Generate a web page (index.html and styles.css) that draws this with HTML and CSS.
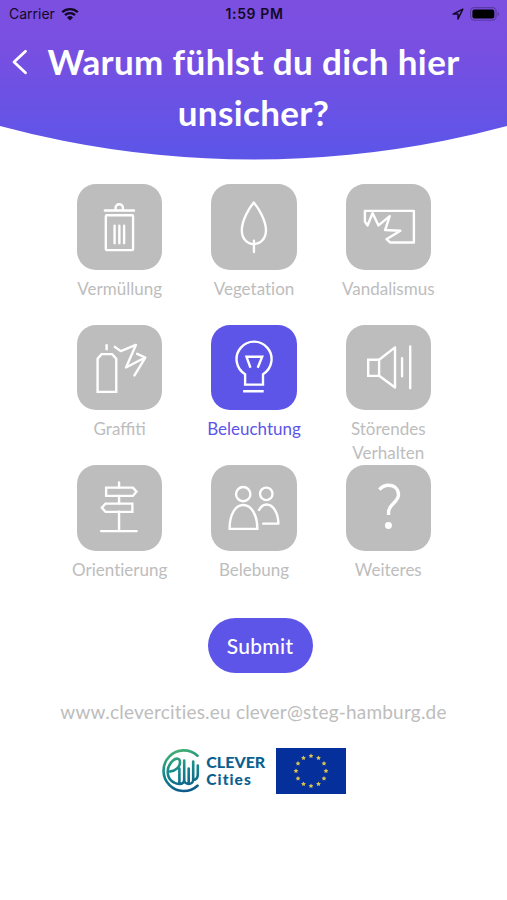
FILE: index.html
```
<!DOCTYPE html>
<html lang="de">
<head>
    <meta charset="UTF-8">
    <meta name="viewport" content="width=device-width, initial-scale=1.0">
    <title>Warum fühlst du dich hier unsicher?</title>
    <link rel="stylesheet" href="styles.css">
</head>
<body>

    <header class="header">
        <div class="status-bar">
            <div class="status-left">
                <span>Carrier</span>
                <svg width="18" height="14" viewBox="0 0 18 14">
                    <path d="M1.2 5.2a11.2 11.2 0 0 1 15.6 0M4 8.1a7.2 7.2 0 0 1 10 0" fill="none" stroke="#120a25" stroke-width="2.3"/>
                    <path d="M9 13.4l-3-3a4.3 4.3 0 0 1 6 0z" fill="#120a25"/>
                </svg>
            </div>
            <span class="status-time">1:59 PM</span>
            <div class="status-right">
                <svg width="12" height="12" viewBox="0 0 12 12">
                    <path d="M1 6.1L10.8 1.2 6 11V6.1z" fill="none" stroke="#120a25" stroke-width="1.5" stroke-linejoin="round"/>
                </svg>
                <svg width="30" height="14" viewBox="0 0 30 14">
                    <rect x=".6" y=".6" width="25.5" height="12.6" rx="3.6" fill="none" stroke="#5a3aa5" stroke-width="1.1"/>
                    <rect x="2.4" y="2.4" width="21.9" height="9" rx="2" fill="#000"/>
                    <path d="M27.6 4.8c2 .8 2 3.6 0 4.4z" fill="#5a3aa5"/>
                </svg>
            </div>
        </div>
        <div class="title-row">
            <button type="button" class="back-btn" aria-label="Zurück">
                <svg width="16" height="26" viewBox="0 0 16 26">
                    <path d="M13.5 2.2L2 13l11.5 10.8" fill="none" stroke="#fff" stroke-width="2.8" stroke-linecap="round" stroke-linejoin="round"/>
                </svg>
            </button>
            <h1>Warum fühlst du dich hier<br>unsicher?</h1>
        </div>
    </header>

    <main class="content">
        <div class="reasons">
            <div class="reason">
                <svg class="tile" viewBox="0 0 86 86">
                    <path d="M28 26.7h29.3M38.8 26v-2a3.7 3.7 0 0 1 7.4 0v2"/>
                    <rect x="29" y="31.5" width="27.4" height="35" rx="1"/>
                    <path d="M37.8 42v17.5M42.6 42v17.5M47.4 42v17.5"/>
                </svg>
                <span class="label">Vermüllung</span>
            </div>
            <div class="reason">
                <svg class="tile" viewBox="0 0 86 86">
                    <path d="M43 60.5C35.500 60 31 54.500 31 46.500 31 37 38 24.500 43 18.500 48 24.500 55.300 37 55.300 46.500 55.300 54.500 50.500 60 43 60.500z"/>
                    <path d="M43.200 57v11.500"/>
                </svg>
                <span class="label plain">Vegetation</span>
            </div>
            <div class="reason">
                <svg class="tile" viewBox="0 0 86 86">
                    <path d="M19 27h49.300v31.800h-24l-3.600-3.300 14-8.500-15.400-.7L44 32.300l-11.300 9.400-6-12.400-5 12.400L19 37.700z"/>
                </svg>
                <span class="label">Vandalismus</span>
            </div>
            <div class="reason">
                <svg class="tile" viewBox="0 0 86 86">
                    <path class="sharp" d="M20.700 67.300V34l4-4.700h10.600l4.200 4.700v33.300zM29.800 19.300v6"/>
                    <path d="M38 22l6 4.300L59.300 20l-10 22.700 19.200-10M60.500 29l8.200 3.700-10.900 18"/>
                </svg>
                <span class="label">Graffiti</span>
            </div>
            <div class="reason selected">
                <svg class="tile" viewBox="0 0 86 86">
                    <path class="sharp" d="M34.300 60V49.500A17.600 17.600 0 1 1 52.300 49.500V60zM32.300 66.700H53M39.700 43l-4-11h15.800L47 43"/>
                </svg>
                <span class="label">Beleuchtung</span>
            </div>
            <div class="reason">
                <svg class="tile" viewBox="0 0 86 86">
                    <path class="sharp" d="M22.300 35h11v16.200h-11z"/>
                    <path d="M33.300 35l16-12.500v40.300L33.300 51M56.400 33.500v18M64.600 21.500v42"/>
                </svg>
                <span class="label">Störendes<br>Verhalten</span>
            </div>
            <div class="reason">
                <svg class="tile" viewBox="0 0 86 86">
                    <path d="M42.300 17.500v5M42.300 31v7.500M42.300 47v19.300M24.300 66.500H60"/>
                    <path class="sharp" d="M29.300 22.800h27l3.500 4-3.500 4.300h-27zM55.700 38.800h-27l-3.700 4.200 3.700 4.100h27z"/>
                </svg>
                <span class="label plain">Orientierung</span>
            </div>
            <div class="reason">
                <svg class="tile" viewBox="0 0 86 86">
                    <circle cx="32.400" cy="29.300" r="7.200"/>
                    <path class="sharp" d="M18.700 64.200c0-14 5.500-23.900 13.700-23.900s14.200 9.900 14.200 23.900z"/>
                    <circle cx="55.600" cy="29" r="6.300"/>
                    <path d="M48.300 45.300c2-3.600 4.500-5.600 7.500-5.600 7 0 11.700 9 12 19.300H52.500"/>
                </svg>
                <span class="label">Belebung</span>
            </div>
            <div class="reason">
                <svg class="tile" viewBox="0 0 86 86">
                    <path class="question" d="M33.600 24.800c2.500-3 5.400-4.400 9-4.400 6.200 0 10.200 3.800 10.200 9.600 0 7.600-10 9.500-10 17.300v3"/>
                    <circle class="dot" cx="42.700" cy="60.800" r="3.500"/>
                </svg>
                <span class="label">Weiteres</span>
            </div>
        </div>

        <button type="button" class="submit-btn">Submit</button>

        <p class="contact">www.clevercities.eu clever@steg-hamburg.de</p>

        <div class="logos">
            <svg class="clever" width="105" height="46" viewBox="0 0 105 46">
                <defs>
                    <linearGradient id="leaf" gradientUnits="userSpaceOnUse" x1="10" y1="0" x2="22" y2="44">
                        <stop offset="0" stop-color="#4cb66c"/>
                        <stop offset=".5" stop-color="#14898c"/>
                        <stop offset="1" stop-color="#0d5a8a"/>
                    </linearGradient>
                </defs>
                <g fill="none" stroke="url(#leaf)" stroke-width="2.6" stroke-linecap="round" stroke-linejoin="round">
                    <path d="M35.500 7.700A20.300 20.300 0 1 0 35.500 37.700"/>
                    <path d="M8 23.500c6-1 10-4.500 10-9.500 0-4-4-4.300-7-1.500-7 6.500-7.500 17.500 1 22 1.700 1 3.800 1.500 5.400 1.500V20.500M17.400 36c3.500 0 4.800-1.800 4.800-4.500V12.500M22.200 31.500c0 6 9 6 9 0V13.500M26.700 35.500V20.500M31.200 32c3.500 0 4.600-2.500 4.600-6v-8.500"/>
                </g>
                <text x="44.300" y="20" textLength="59" lengthAdjust="spacingAndGlyphs">CLEVER</text>
                <text x="44.300" y="37" textLength="44.500">Cities</text>
            </svg>
            <svg class="flag" width="70" height="46" viewBox="0 0 70 46">
                <defs>
                    <path id="star" d="M0-2.500L.8-.9 2.400-.7 1.200.4 1.500 2.100 0 1.300-1.500 2.100-1.200.4-2.400-.7-.8-.9z" fill="#d8c553"/>
                </defs>
                <rect width="70" height="46" fill="#052f9b"/>
                <use href="#star" x="35" y="8"/>
                <use href="#star" x="42.500" y="10"/>
                <use href="#star" x="48" y="15.500"/>
                <use href="#star" x="50" y="23"/>
                <use href="#star" x="48" y="30.500"/>
                <use href="#star" x="42.500" y="36"/>
                <use href="#star" x="35" y="38"/>
                <use href="#star" x="27.500" y="36"/>
                <use href="#star" x="22" y="30.500"/>
                <use href="#star" x="20" y="23"/>
                <use href="#star" x="22" y="15.500"/>
                <use href="#star" x="27.500" y="10"/>
            </svg>
        </div>
    </main>

</body>
</html>
```
FILE: styles.css
```
* {
    box-sizing: border-box;
}

body {
    margin: 0;
    width: 507px;
    height: 900px;
    background-color: #fff;
    font-family: Lato, sans-serif;
    overflow: hidden;
}

/* Purple header with a curved bottom edge */
.header {
    height: 160px;
    background: linear-gradient(#7d4fe0 0, #784fe1 50px, #5d55e8 150px);
    clip-path: circle(976px at 50% -816.5px);
}

.status-bar {
    display: grid;
    grid-template-columns: 1fr auto 1fr;
    align-items: center;
    height: 27px;
    padding: 0 7px 0 9px;
    color: #120a25;
    font-family: Inter, sans-serif;
    font-size: 14px;
}

.status-left,
.status-right {
    display: flex;
    align-items: center;
    gap: 6px;
}

.status-right {
    justify-content: flex-end;
}

.status-time {
    font-weight: 600;
    letter-spacing: 0.6px;
}

.title-row {
    display: flex;
    align-items: flex-start;
    padding: 9px 0 0 12px;
}

.back-btn {
    display: flex;
    padding: 13px 0 0;
    border: none;
    background: none;
    cursor: pointer;
}

.header h1 {
    flex: 1;
    margin: 0 28px 0 0;
    color: #fff;
    font-size: 35px;
    font-weight: 700;
    line-height: 51px;
    letter-spacing: 0.37px;
    text-align: center;
    white-space: nowrap;
}

.content {
    display: flex;
    flex-direction: column;
    align-items: center;
    padding-top: 24px;
}

/* 3x3 grid of reasons */
.reasons {
    display: grid;
    grid-template-columns: repeat(3, 134.3px);
    grid-auto-rows: 140.5px;
    margin-left: 1px;
}

.reason {
    display: flex;
    flex-direction: column;
    align-items: center;
    color: #bdbdbd;
}

.tile {
    flex: none;
    width: 85.5px;
    height: 85.5px;
    border-radius: 19px;
    background-color: #bdbdbd;
    fill: none;
    stroke: #fff;
    stroke-width: 2.4;
    stroke-linecap: round;
    stroke-linejoin: round;
}

.tile .sharp {
    stroke-linecap: butt;
    stroke-linejoin: miter;
}

.tile .question {
    stroke-width: 3.4;
    stroke-linecap: butt;
}

.tile .dot {
    fill: #fff;
    stroke: none;
}

.label {
    margin-top: 7px;
    font-size: 17px;
    line-height: 24px;
    text-align: center;
    white-space: nowrap;
}

.plain {
    font-variant-ligatures: none;
}

.selected {
    color: #5d55e8;
}

.selected .tile {
    background-color: #5d55e8;
}

.submit-btn {
    width: 105px;
    height: 55px;
    margin: 12px 0 0 13px;
    border: none;
    border-radius: 28px;
    background-color: #5d55e8;
    color: #fff;
    font-family: inherit;
    font-size: 21px;
    font-weight: 500;
    letter-spacing: 0.3px;
    cursor: pointer;
}

.contact {
    margin: 26px 0 0;
    color: #bdbdbd;
    font-size: 19px;
    line-height: 26px;
    letter-spacing: 0.2px;
    white-space: nowrap;
}

.logos {
    display: flex;
    gap: 9px;
    margin-top: 23px;
}

.clever text {
    fill: #0d5f8f;
    font-size: 15.5px;
    font-weight: 900;
    font-variant-ligatures: none;
}
```
